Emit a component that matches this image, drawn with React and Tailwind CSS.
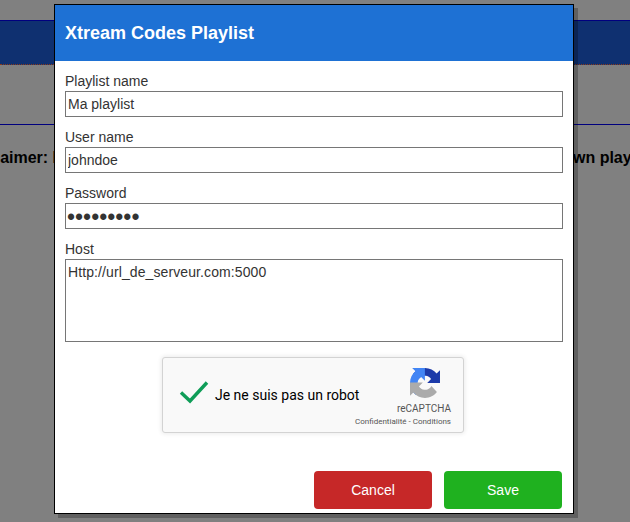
import React from 'react';

function RecaptchaLogo() {
  return (
    <svg viewBox="0 0 64 64" className="w-[30px] h-[30px]">
      <path fill="#1c3aa9" d="M64 31.955l-.033-1.37V4.687l-7.16 7.16C50.948 4.674 42.033.093 32.05.093c-10.4 0-19.622 4.96-25.458 12.64l11.736 11.86a15.55 15.55 0 0 1 4.754-5.334c2.05-1.6 4.952-2.906 8.968-2.906.485 0 .86.057 1.135.163 4.976.393 9.288 3.14 11.828 7.124l-8.307 8.307c10.522-.04 22.4-.066 27.295.006" />
      <path fill="#4285f4" d="M31.862.001l-1.37.033H4.593l7.16 7.16C4.58 13.053 0 21.968 0 31.95c0 10.4 4.96 19.622 12.64 25.458l11.86-11.736a15.55 15.55 0 0 1-5.334-4.754c-1.6-2.05-2.906-4.952-2.906-8.968 0-.485.057-.86.163-1.135.393-4.976 3.14-9.288 7.124-11.828l8.307 8.307c-.04-10.522-.066-22.4.006-27.295" />
      <path fill="#ababab" d="M.001 32l.033 1.37v25.898l7.16-7.16c5.86 7.173 14.774 11.753 24.76 11.753 10.4 0 19.622-4.96 25.458-12.64L45.676 38.4a15.55 15.55 0 0 1-4.754 5.334c-2.05 1.6-4.952 2.906-8.968 2.906-.485 0-.86-.057-1.135-.163-4.976-.393-9.288-3.14-11.828-7.124l8.307-8.307c-10.522.04-22.4.066-27.295-.006" />
    </svg>
  );
}

function Field({ label, type = 'text', value, inputClass = 'text-sm px-[2px]' }) {
  return (
    <label className="block mb-[11px]">
      <span className="block h-[19px] leading-[18px] text-sm text-[#333]">{label}</span>
      <input
        type={type}
        defaultValue={value}
        className={`block w-full h-[26px] border border-[#767676] text-[#333] bg-white outline-none ${inputClass}`}
      />
    </label>
  );
}

export default function App() {
  return (
    <div className="relative w-[630px] h-[522px] overflow-hidden bg-[#808080] font-['Liberation_Sans',Arial,sans-serif]">
      {/* page behind the dialog */}
      <div className="pt-5">
        <div className="h-[45px] bg-[#0f3070] border-t border-t-[#00007f] border-b border-b-[#8a3a1a] [border-bottom-style:dotted]" />
        <div className="h-[60px] border-b border-[#00007f]" />
        <div className="flex justify-center mt-[21px] whitespace-nowrap font-bold text-base text-black">
          <span className="shrink-0">Disclaimer: It doesn't provide any playlists or media contents, please add your own playlists.</span>
        </div>
      </div>

      {/* dialog */}
      <div className="absolute left-[54px] top-1 w-[520px] h-[510px] bg-white border border-black shadow-[4px_4px_0_rgba(0,0,0,0.25)] flex flex-col">
        <div className="h-14 shrink-0 bg-[#1e71d4] flex items-center px-[10px] text-lg font-bold text-white">
          Xtream Codes Playlist
        </div>
        <div className="flex-1 flex flex-col px-[10px] pt-[11px]">
          <Field label="Playlist name" value="Ma playlist" />
          <Field label="User name" value="johndoe" />
          <Field label="Password" type="password" value="johndoe12" inputClass="text-[23px] pl-px pr-[2px] pt-[2px]" />
          <label className="block">
            <span className="block h-[19px] leading-[18px] text-sm text-[#333]">Host</span>
            <textarea
              defaultValue="Http://url_de_serveur.com:5000"
              className="block w-full h-[83px] border border-[#767676] px-[2px] pt-[2px] text-sm tracking-[0.1px] text-[#333] bg-white outline-none resize-none"
            />
          </label>

          <div className="mt-[15px] ml-[97px] self-start w-[302px] h-[76px] bg-[#f9f9f9] border border-[#d3d3d3] rounded-[3px] shadow-[0_0_4px_1px_rgba(0,0,0,0.08)] flex items-center font-['Roboto',sans-serif]">
            <svg viewBox="0 0 30 24" className="w-[30px] h-6 ml-[16px] -mt-1.5 shrink-0">
              <path d="M2 12.5 L11 21 L28 2.5" fill="none" stroke="#0f9d58" strokeWidth="3.4" />
            </svg>
            <span className="ml-[6px] text-sm text-black">Je ne suis pas un robot</span>
            <div className="ml-auto mr-3 w-[70px] flex flex-col items-end self-start">
              <div className="mt-[10px] mr-[11px]">
                <RecaptchaLogo />
              </div>
              <div className="mt-[5px] text-[10px] leading-3 text-[#555]">reCAPTCHA</div>
              <div className="mt-[2px] text-[8px] leading-[10px] text-[#555] whitespace-nowrap">Confidentialité - Conditions</div>
            </div>
          </div>

          <div className="mt-auto mb-1 flex justify-end gap-3 pr-px">
            <button className="w-[118px] h-[38px] rounded bg-[#c62828] text-sm text-white">Cancel</button>
            <button className="w-[118px] h-[38px] rounded bg-[#1fb11f] text-sm text-white">Save</button>
          </div>
        </div>
      </div>
    </div>
  );
}
